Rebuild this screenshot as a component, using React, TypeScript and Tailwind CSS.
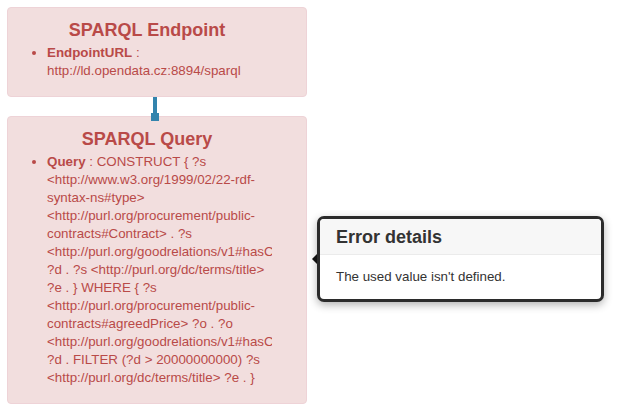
import React from "react";

const QUERY =
  "CONSTRUCT { ?s <http://www.w3.org/1999/02/22-rdf-syntax-ns#type> <http://purl.org/procurement/public-contracts#Contract> . ?s <http://purl.org/goodrelations/v1#hasCurrencyValue> ?d . ?s <http://purl.org/dc/terms/title> ?e . } WHERE { ?s <http://purl.org/procurement/public-contracts#agreedPrice> ?o . ?o <http://purl.org/goodrelations/v1#hasCurrencyValue> ?d . FILTER (?d > 20000000000) ?s <http://purl.org/dc/terms/title> ?e . }";

function Node({ title, label, value }: { title: string; label: string; value: string }) {
  return (
    <div className="rounded-[4px] border border-[#eed3d7] bg-[#f2dede] pl-[14px] pr-[34px] pt-[11px] pb-[16px] text-[#b94a48]">
      <div className="overflow-hidden">
        <div className="text-center text-[18px] font-bold leading-[22px]">{title}</div>
        <ul className="mt-[3px] ml-[25px] list-disc text-[13.35px] leading-[18px]">
          <li>
            <b>{label}</b> : {value}
          </li>
        </ul>
      </div>
    </div>
  );
}

export default function App() {
  return (
    <div
      className="relative h-[413px] w-[629px] bg-white"
      style={{ fontFamily: '"Liberation Sans", Arial, sans-serif' }}
    >
      <div className="flex w-[300px] flex-col pl-0 ml-[7px] pt-[7px]">
        <Node title="SPARQL Endpoint" label="EndpointURL" value="http://ld.opendata.cz:8894/sparql" />
        <div className="relative z-10 -mb-[5px] ml-[144px] flex w-[8px] flex-col items-center">
          <div className="h-[16px] w-[4px] bg-[#3384ad]" />
          <div className="h-[8px] w-[8px] bg-[#3384ad]" />
        </div>
        <Node title="SPARQL Query" label="Query" value={QUERY} />
      </div>

      <div className="absolute left-[317px] top-[216px] w-[287px] rounded-[7px] border-[3px] border-[#2b2b2b] bg-white shadow-[0_3px_8px_rgba(0,0,0,0.3)]">
        <div className="absolute left-[-8px] top-[35px] h-0 w-0 border-y-[5px] border-r-[5px] border-y-transparent border-r-[#111]" />
        <div className="h-[36px] rounded-t-[4px] border-b border-[#ebebeb] bg-[#f7f7f7] px-[16px] text-[18px] font-bold leading-[36px] text-[#333]">
          Error details
        </div>
        <div className="px-[16px] py-[13px] text-[13.35px] leading-[18px] text-[#333]">
          The used value isn't defined.
        </div>
      </div>
    </div>
  );
}
